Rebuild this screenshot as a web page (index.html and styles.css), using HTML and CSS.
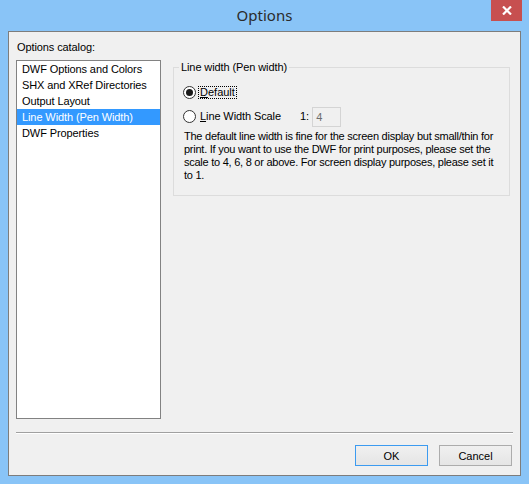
FILE: index.html
```html
<!DOCTYPE html>
<html>
<head>
<meta charset="utf-8">
<link rel="stylesheet" href="styles.css">
</head>
<body>
<div class="window">
  <div class="titlebar">
    <span class="title">Options</span>
    <div class="close">
      <svg width="10" height="9" viewBox="0 0 10 9"><path d="M1 0.5 L9 8.5 M9 0.5 L1 8.5" stroke="#fff" stroke-width="2.2" fill="none"/></svg>
    </div>
  </div>
  <div class="client">
    <div class="catalog-label">Options catalog:</div>
    <div class="main">
      <ul class="list">
        <li>DWF Options and Colors</li>
        <li>SHX and XRef Directories</li>
        <li>Output Layout</li>
        <li class="selected">Line Width (Pen Width)</li>
        <li>DWF Properties</li>
      </ul>
      <fieldset class="group">
        <legend>Line width (Pen width)</legend>
        <div class="radio-row row1">
          <span class="radio checked"></span>
          <span class="focus"><u>D</u>efault</span>
        </div>
        <div class="radio-row row2">
          <span class="radio"></span>
          <span class="lbl"><u>L</u>ine Width Scale</span>
          <span class="ratio">1:</span>
          <span class="input">4</span>
        </div>
        <p class="desc">The default line width is fine for the screen display but small/thin for print. If you want to use the DWF for print purposes, please set the scale to 4, 6, 8 or above. For screen display purposes, please set it to 1.</p>
      </fieldset>
    </div>
    <div class="sep"></div>
    <div class="buttons">
      <button class="btn default">OK</button>
      <button class="btn">Cancel</button>
    </div>
  </div>
</div>
</body>
</html>
```
FILE: styles.css
```css
* { box-sizing: border-box; }
html, body { margin: 0; padding: 0; }
body {
  width: 529px;
  height: 484px;
  overflow: hidden;
  background: #89c4f7;
  font-family: "Liberation Sans", Arial, sans-serif;
  font-size: 11px;
  color: #000;
}
.window {
  width: 529px;
  height: 484px;
  background: #89c4f7;
  display: flex;
  flex-direction: column;
}
.titlebar {
  position: relative;
  height: 31px;
  display: flex;
  justify-content: center;
}
.title {
  font-family: "Noto Sans", "Open Sans", sans-serif;
  font-size: 15px;
  line-height: 20px;
  padding-top: 5px;
  color: #2b2b2b;
}
.close {
  position: absolute;
  top: 0;
  right: 7px;
  width: 31px;
  height: 21px;
  background: #c75050;
  display: flex;
  align-items: center;
  justify-content: center;
}
.client {
  margin: 0 8px;
  height: 445px;
  border: 1px solid #7d7d7d;
  background: #f0f0f0;
  padding: 9px 0 0 7px;
  display: flex;
  flex-direction: column;
}
.catalog-label {
  line-height: 13px;
  margin-left: 1px;
  letter-spacing: -0.1px;
}
.main {
  display: flex;
  margin-top: 6px;
  align-items: flex-start;
}
.list {
  list-style: none;
  margin: 0;
  padding: 0;
  width: 145px;
  height: 359px;
  border: 1px solid #828282;
  background: #fff;
}
.list li {
  height: 16px;
  line-height: 16px;
  padding-left: 5px;
  white-space: nowrap;
  letter-spacing: -0.1px;
}
.list li.selected {
  background: #3399ff;
  color: #fff;
}
.group {
  margin: 1px 0 0 12px;
  width: 337px;
  border: 1px solid #dcdcdc;
  padding: 0 3px 13px 5px;
  min-width: 0;
}
.group legend {
  padding: 0 2px;
  line-height: 13px;
  letter-spacing: -0.1px;
}
.radio-row {
  display: flex;
  align-items: center;
}
.row1 {
  height: 16px;
  margin-top: 10px;
}
.row2 {
  height: 21px;
  margin-top: 6px;
}
.radio {
  width: 13px;
  height: 13px;
  border: 1px solid #333;
  border-radius: 50%;
  background: #fff;
  margin-left: 4px;
  display: flex;
  align-items: center;
  justify-content: center;
  flex: none;
}
.radio.checked::after {
  content: "";
  width: 7px;
  height: 7px;
  border-radius: 50%;
  background: #1a1a1a;
}
.focus {
  margin-left: 2px;
  border: 1px dotted #000;
  line-height: 11px;
  padding: 0 1px 0 1px;
}
.lbl {
  margin-left: 4px;
  line-height: 13px;
  letter-spacing: -0.1px;
}
.ratio {
  margin-left: 19px;
  line-height: 13px;
}
.input {
  margin-left: 3px;
  width: 29px;
  height: 20px;
  border: 1px solid #d4d4d4;
  background: #f0f0f0;
  color: #6d6d6d;
  line-height: 18px;
  padding-left: 3px;
}
.desc {
  margin: 3px 5px 0 5px;
  line-height: 13px;
  letter-spacing: -0.25px;
}
.sep {
  margin: 13px 7px 0 0;
  height: 2px;
  border-top: 1px solid #a0a0a0;
  border-bottom: 1px solid #fff;
}
.buttons {
  display: flex;
  justify-content: flex-end;
  gap: 11px;
  margin: 11px 8px 0 0;
}
.btn {
  width: 73px;
  height: 21px;
  margin: 0;
  padding: 0;
  font-family: "Liberation Sans", Arial, sans-serif;
  font-size: 11px;
  color: #000;
  border: 1px solid #acacac;
  background: linear-gradient(#f0f0f0, #e5e5e5);
}
.btn.default {
  border-color: #3c9bf0;
}
```
